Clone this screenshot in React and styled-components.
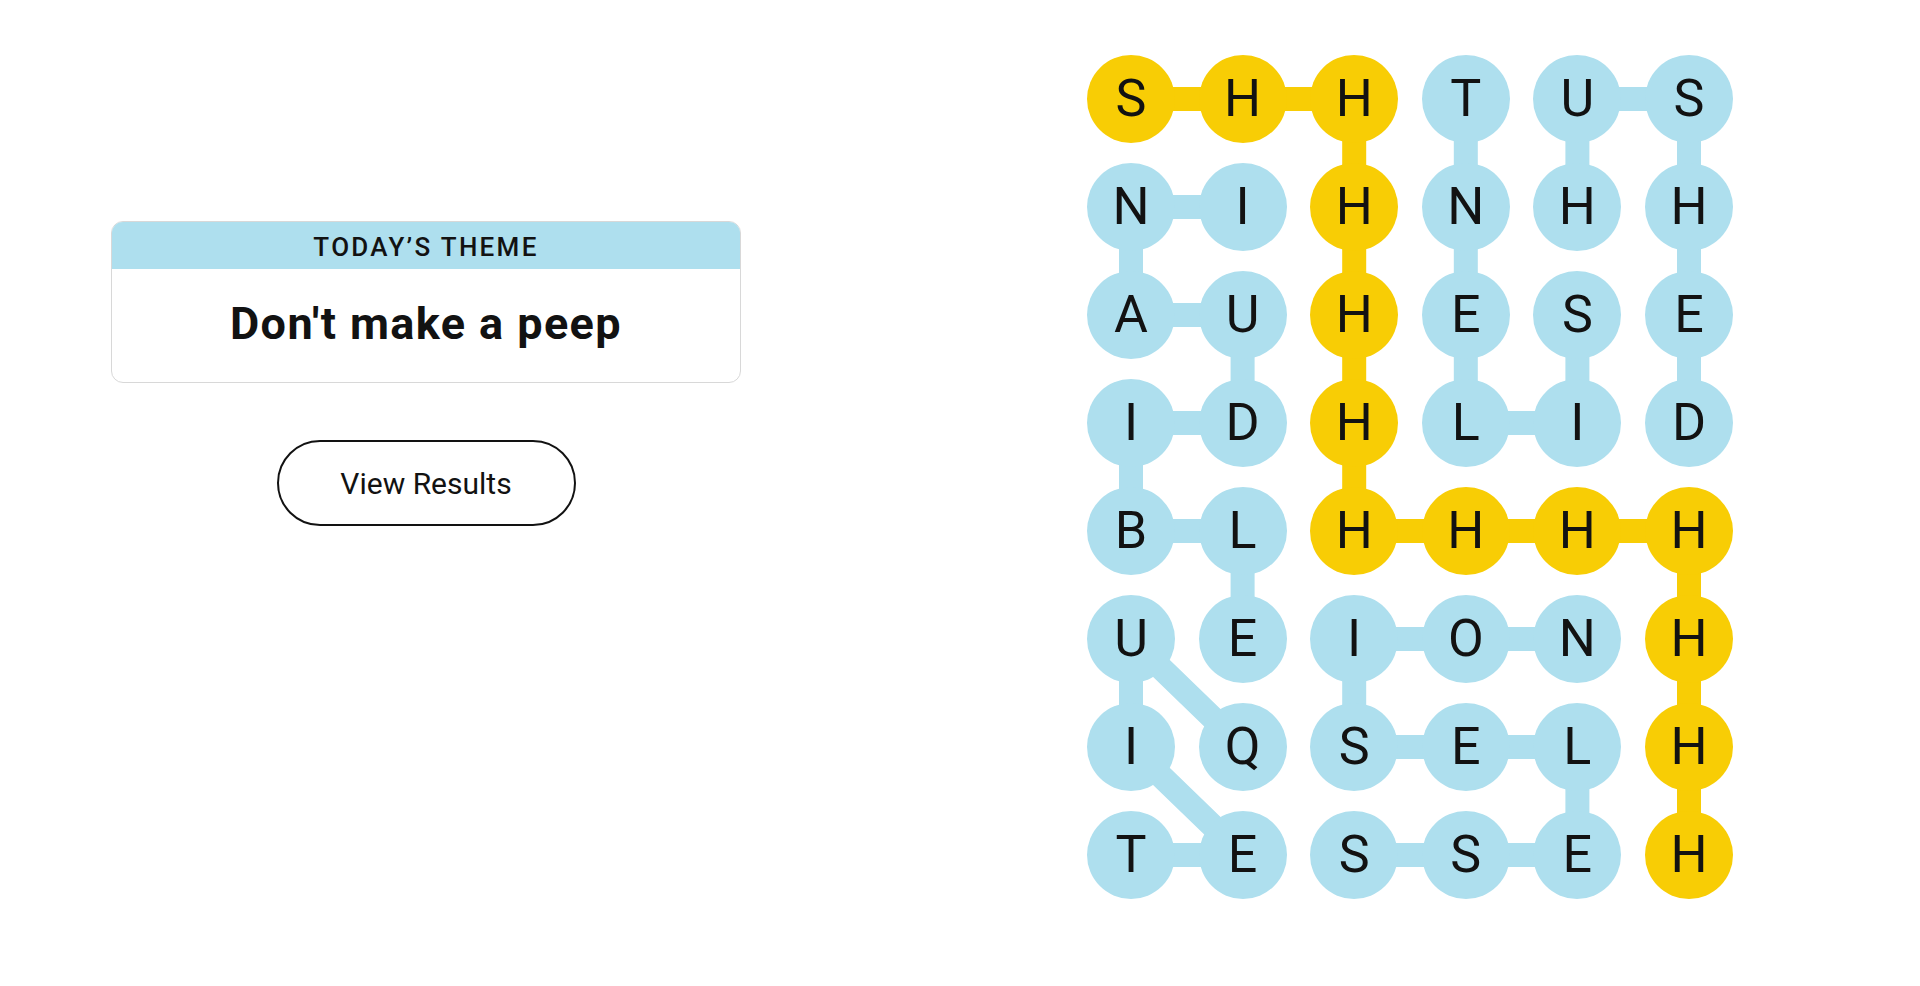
import React from "react";
import styled, { createGlobalStyle } from "styled-components";

const GlobalStyle = createGlobalStyle`
  html, body { margin: 0; padding: 0; background: #ffffff; }
  body { font-family: Roboto, "Liberation Sans", sans-serif; color: #121212; }
`;

const BLUE = "#aedfee";
const YELLOW = "#f8cd05";
const COL_PITCH = 111.6;
const ROW_PITCH = 108;
const SIZE = 88;

const Page = styled.main`
  display: flex;
  align-items: flex-start;
  padding: 55px 0 0 111px;
`;

const Sidebar = styled.section`
  width: 630px;
  margin-top: 166px;
  display: flex;
  flex-direction: column;
  align-items: center;
`;

const ThemeCard = styled.div`
  width: 100%;
  box-sizing: border-box;
  border: 1.5px solid #d8d8d8;
  border-radius: 12px;
  overflow: hidden;
  display: flex;
  flex-direction: column;
`;

const ThemeHeader = styled.div`
  height: 47px;
  padding-top: 2px;
  box-sizing: border-box;
  background: ${BLUE};
  display: flex;
  align-items: center;
  justify-content: center;
  font-family: Roboto, sans-serif;
  font-weight: 500;
  font-size: 26px;
  letter-spacing: 2.3px;
  text-transform: uppercase;
  color: #121212;
`;

const ThemeBody = styled.div`
  height: 113px;
  padding-bottom: 4px;
  box-sizing: border-box;
  display: flex;
  align-items: center;
  justify-content: center;
  font-family: Roboto, sans-serif;
  font-weight: 700;
  font-size: 45px;
  letter-spacing: 1.4px;
  color: #121212;
`;

const ResultsButton = styled.button`
  margin-top: 57px;
  width: 299px;
  height: 86px;
  box-sizing: border-box;
  border: 2px solid #121212;
  border-radius: 43px;
  background: #ffffff;
  font-family: Roboto, sans-serif;
  font-weight: 400;
  font-size: 30px;
  color: #121212;
  cursor: pointer;
`;

const Board = styled.div`
  position: relative;
  margin-left: 346px;
  width: ${5 * COL_PITCH + SIZE}px;
  height: ${7 * ROW_PITCH + SIZE}px;
`;

const Links = styled.svg`
  position: absolute;
  inset: 0;
  width: 100%;
  height: 100%;
  overflow: visible;
`;

const Cells = styled.div`
  position: relative;
  display: grid;
  grid-template-columns: repeat(6, ${SIZE}px);
  grid-auto-rows: ${SIZE}px;
  column-gap: ${COL_PITCH - SIZE}px;
  row-gap: ${ROW_PITCH - SIZE}px;
`;

const Cell = styled.div`
  width: ${SIZE}px;
  height: ${SIZE}px;
  border-radius: 50%;
  background: ${(p) => (p.$gold ? YELLOW : BLUE)};
  display: flex;
  align-items: center;
  justify-content: center;
  font-family: Roboto, sans-serif;
  font-weight: 400;
  font-size: 52px;
  line-height: 1;
  color: #121212;
  text-transform: uppercase;
`;

const letters = [
  "SHHTUS",
  "NIHNHH",
  "AUHESE",
  "IDHLID",
  "BLHHHH",
  "UEIONH",
  "IQSELH",
  "TESSEH",
];

const gold = [
  [0, 0], [0, 1], [0, 2], [1, 2], [2, 2], [3, 2], [4, 2],
  [4, 3], [4, 4], [4, 5], [5, 5], [6, 5], [7, 5],
];

const words = [
  { gold: true, path: gold },
  { path: [[1, 1], [1, 0], [2, 0], [2, 1], [3, 1], [3, 0], [4, 0], [4, 1], [5, 1]] },
  { path: [[6, 1], [5, 0], [6, 0], [7, 1], [7, 0]] },
  { path: [[2, 4], [3, 4], [3, 3], [2, 3], [1, 3], [0, 3]] },
  { path: [[1, 4], [0, 4], [0, 5], [1, 5], [2, 5], [3, 5]] },
  { path: [[5, 4], [5, 3], [5, 2], [6, 2], [6, 3], [6, 4], [7, 4], [7, 3], [7, 2]] },
];

const goldSet = new Set(gold.map(([r, c]) => `${r}-${c}`));
const cx = (c) => SIZE / 2 + c * COL_PITCH;
const cy = (r) => SIZE / 2 + r * ROW_PITCH;

export default function App() {
  return (
    <>
      <GlobalStyle />
      <Page>
        <Sidebar>
          <ThemeCard>
            <ThemeHeader>Today’s Theme</ThemeHeader>
            <ThemeBody>Don't make a peep</ThemeBody>
          </ThemeCard>
          <ResultsButton>View Results</ResultsButton>
        </Sidebar>
        <Board>
          <Links>
            {words.map((w, i) => (
              <polyline
                key={i}
                points={w.path.map(([r, c]) => `${cx(c)},${cy(r)}`).join(" ")}
                fill="none"
                stroke={w.gold ? YELLOW : BLUE}
                strokeWidth="24"
                strokeLinejoin="miter"
              />
            ))}
          </Links>
          <Cells>
            {letters.map((row, r) =>
              row.split("").map((ch, c) => (
                <Cell key={`${r}-${c}`} $gold={goldSet.has(`${r}-${c}`)}>
                  {ch}
                </Cell>
              ))
            )}
          </Cells>
        </Board>
      </Page>
    </>
  );
}
